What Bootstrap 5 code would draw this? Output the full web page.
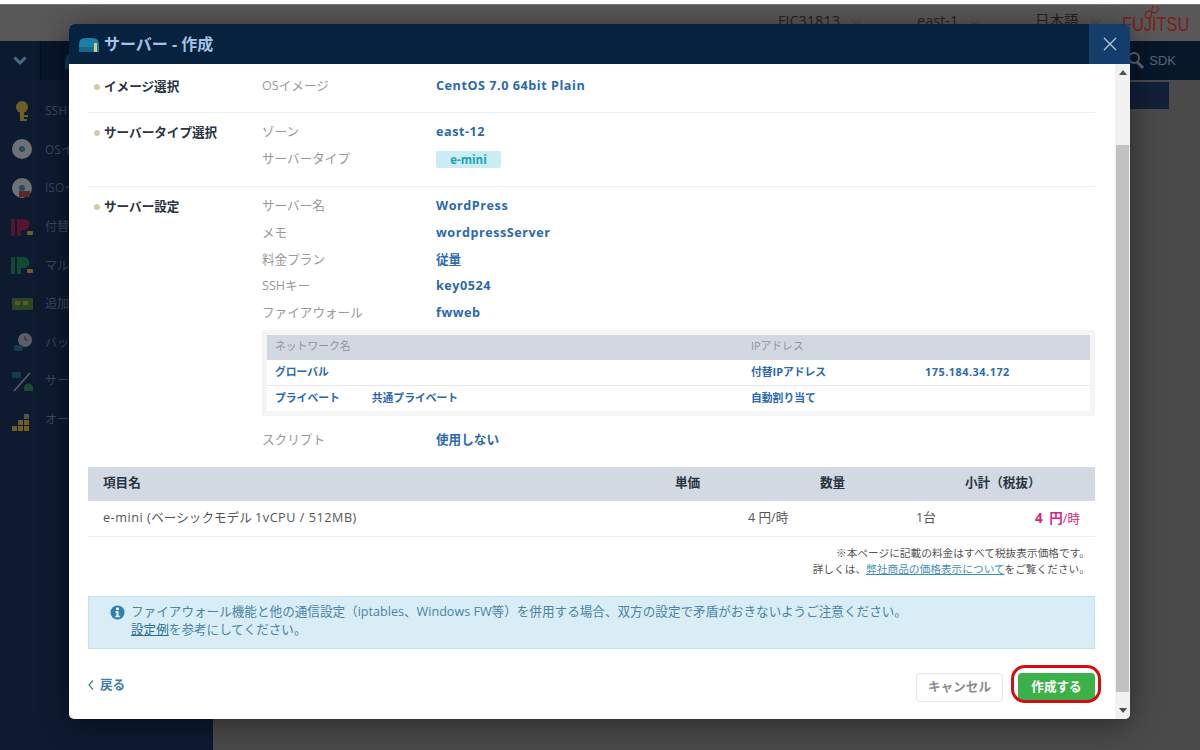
<!DOCTYPE html>
<html lang="ja">
<head>
  <meta charset="UTF-8" />
  <meta name="viewport" content="width=device-width, initial-scale=1" />
  <title>サーバー - 作成</title>
  <link href="https://cdn.jsdelivr.net/npm/bootstrap@5.3.0/dist/css/bootstrap.min.css" rel="stylesheet" />
  <style>
    html, body { height: 750px; overflow: hidden; }
    body { font-family: "Open Sans", "Noto Sans CJK JP", sans-serif; font-size: 12.6px; background: #4a4a4a; position: relative; }
    .lat { letter-spacing: .55px; }

    /* dimmed page behind the dialog */
    .strip-top { height: 5px; background: #fff; border-bottom: 1px solid #777; }
    .head-bar { height: 36px; background: #585858; color: #222; font-size: 14.5px; }
    .head-item { width: 100px; padding-bottom: 4px; }
    .head-item svg { margin-left: 12px; }
    .logo-fj { font-family: "Liberation Sans", sans-serif; font-size: 21px; line-height: 21px; color: #7f1d1d; width: 78px; height: 21px; position: relative; transform: scaleX(.78); transform-origin: left; white-space: nowrap; }
    .logo-fj svg { position: absolute; left: 26px; top: -7px; }
    .nav-dark { height: 39px; background: #08162a; color: #5b6572; }
    .nav-cell { width: 41px; height: 39px; background: #0b1a2e; border-right: 1px solid #050f1f; }
    .side-dark { width: 213px; height: 670px; background: #0d1a30; padding-top: 12px; }
    .side-row { height: 38.6px; color: #3f4857; font-size: 12px; padding-left: 11px; gap: 11px; white-space: nowrap; }
    .side-row svg { width: 23px; height: 23px; flex: none; opacity: .75; }
    .main-dim { height: 670px; padding: 2px 31px 0 0; }
    .dim-btn { width: 39px; height: 27px; background: #121f38; }

    /* dialog */
    .dlg { position: absolute; left: 69px; top: 24px; width: 1061px; height: 695px; border: 0; border-radius: 5px; overflow: hidden; background: #fff; box-shadow: 0 4px 30px rgba(0,0,0,.45); }
    .dlg-head { height: 40px; background: #07223f; color: #a3c2e8; font-size: 16px; font-weight: 700; padding-left: 10px; gap: 5px; }
    .dlg-close { width: 41px; height: 40px; background: #143d6b; border: 0; padding: 0; }
    .dlg-body { height: 655px; }
    .dlg-scroll { padding: 0 20px 0 19px; min-width: 0; }
    .bar-track { width: 15px; background: #f1f1f1; }
    .bar-thumb { height: 547px; margin: 81px 1px 0 1px; background: #c1c1c1; }
    .bar-arrow { height: 17px; }

    .sect { border-bottom: 1px solid #e9f1f7; padding-left: 6px; }
    .sect-first { height: 49px; padding-top: 9px; }
    .sect-second { height: 74px; padding-top: 6px; }
    .sect-last { border-bottom: 0; padding-top: 6px; }
    .sect-name { width: 168px; font-weight: 700; color: #2a3342; line-height: 27px; flex: none; }
    .dot-mark { display: inline-block; width: 6px; height: 6px; border-radius: 50%; background: #d3cca2; margin-right: 4px; vertical-align: 1px; }
    .info-row { height: 26.8px; line-height: 26.8px; }
    .info-key { width: 174px; color: #999; flex: none; }
    .info-val { color: #2a69b0; font-weight: 700; }
    .tag-type { display: inline-block; width: 65px; height: 17px; line-height: 17px; text-align: center; background: #c9edf2; color: #1aa1b5; font-size: 11.5px; border-radius: 2px; vertical-align: -1px; }

    .net-box { background: #f5f5f5; padding: 5px; margin: 3px 0 11px; }
    .net-table { table-layout: fixed; font-size: 10.8px; }
    .net-table th, .net-table td { height: 25px; padding: 0 0 0 8px; border-bottom: 1px solid #e6e8ec; vertical-align: middle; line-height: 1; background: #fff; color: #2a69b0; font-weight: 700; box-shadow: none; }
    .net-table th { background: #d2d8e1; color: #8f959d; font-weight: 400; border-bottom: 0; padding-bottom: 3px; }
    .net-table tbody tr:first-child td { height: 26px; padding-bottom: 1px; }
    .net-table tr:last-child td { border-bottom: 0; }
    .net-gap { margin-left: 32px; }

    .cost-table { table-layout: fixed; margin: 13px 0 0; color: #555; }
    .cost-table th, .cost-table td { padding: 0; vertical-align: middle; border-bottom: 1px solid #eef0f3; box-shadow: none; color: #555; font-weight: 400; background: #fff; }
    .cost-table th { height: 34px; background: #d2d9e2; color: #2a3342; font-weight: 700; border-bottom: 0; }
    .cost-table td { height: 36px; }
    .price-sum { color: #d6267f !important; text-align: right; padding-right: 15px !important; }
    .price-sum b { font-size: 13.5px; word-spacing: 3px; }
    .note-text { font-size: 10.7px; line-height: 16px; color: #555; text-align: right; padding: 8px 5px 0 0; }
    .note-text a { color: #3f90b5; }

    .alert-soft { background: #d8edf5; border: 1px solid #c2e4ef; color: #4c83a6; height: 53px; margin: 19px 0 0; padding: 6px 0 0 21px; border-radius: 0; line-height: 18px; gap: 6px; }
    .alert-soft a { color: #2a6f93; }
    .alert-soft svg { margin-top: 2px; flex: none; }
    .foot-row { height: 54px; margin-top: 20px; }
    .back-link { color: #3f7fa8; font-weight: 700; text-decoration: none; padding-top: 6px; gap: 6px; height: 26px; }
    .btn-cancel { width: 87px; height: 29px; padding: 0; background: #fff; border: 1px solid #e6e6e6; color: #8c8c8c; font-weight: 700; font-size: 12.6px; border-radius: 4px; }
    .btn-make { width: 77px; height: 28px; padding: 0; background: #3cb14a; border: 0; color: #fff; font-weight: 700; font-size: 12.6px; border-radius: 4px; }
    .ring-wrap { position: relative; margin-left: 15px; }
    .ring-wrap::after { content: ""; position: absolute; left: -7px; right: -6px; top: -8px; bottom: -2px; border: 3px solid #d40d12; border-radius: 14px; pointer-events: none; }
  </style>
</head>
<body>

<!-- page behind -->
<div class="strip-top"></div>
<div class="head-bar d-flex align-items-center justify-content-end">
  <div class="head-item" style="margin-right:39px">FJC31813<svg width="9" height="5" viewBox="0 0 9 5"><path d="m.5.500 4 4 4-4" fill="none" stroke="#444"/></svg></div>
  <div class="head-item" style="margin-right:18px">east-1<svg width="9" height="5" viewBox="0 0 9 5"><path d="m.5.500 4 4 4-4" fill="none" stroke="#444"/></svg></div>
  <div class="head-item" style="width:87px">日本語<svg width="9" height="5" viewBox="0 0 9 5"><path d="m.5.500 4 4 4-4" fill="none" stroke="#444"/></svg></div>
  <div class="logo-fj">
    <svg width="24" height="12" viewBox="0 0 24 12"><path d="M12 6c-3-5-9-5-9 0s6 5 9 0 9-5 9 0-6 5-9 0z" transform="rotate(-35 12 6)" fill="none" stroke="#7f1d1d" stroke-width="1.400"/></svg>
    FUJITSU
  </div>
</div>
<div class="nav-dark d-flex align-items-center justify-content-between">
  <div class="d-flex align-items-center">
    <div class="nav-cell d-flex align-items-center justify-content-center">
      <svg width="14" height="10" viewBox="0 0 14 10"><path d="M1.500 1.500 7 7l5.500-5.500" fill="none" stroke="#4a6a85" stroke-width="3"/></svg>
    </div>
    <svg class="ms-4" width="14" height="16" viewBox="0 0 14 16"><path d="M0 16V8q0-7 7-7h7v15z" fill="#123a52"/></svg>
  </div>
  <div class="d-flex align-items-center pe-4 gap-1">
    <svg width="18" height="18" viewBox="0 0 18 18"><circle cx="7" cy="6" r="5" fill="none" stroke="#5b6572" stroke-width="2"/><path d="m10 10 6 6" stroke="#5b6572" stroke-width="3"/></svg>
    <span style="font-family:'Liberation Sans',sans-serif;font-size:13px">SDK</span>
  </div>
</div>
<div class="d-flex">
  <div class="side-dark">
    <div class="side-row d-flex align-items-center">
      <svg viewBox="0 0 23 23"><circle cx="11" cy="7" r="6" fill="#8f7425"/><rect x="9" y="10" width="4" height="11" fill="#8f7425"/><rect x="13" y="15" width="4" height="2" fill="#8f7425"/><rect x="13" y="19" width="3" height="2" fill="#8f7425"/></svg>SSHキー
    </div>
    <div class="side-row d-flex align-items-center">
      <svg viewBox="0 0 23 23"><circle cx="11" cy="11" r="10" fill="#8e8e8e"/><circle cx="11" cy="11" r="3" fill="#2d5a66"/></svg>OSイメージ
    </div>
    <div class="side-row d-flex align-items-center">
      <svg viewBox="0 0 23 23"><circle cx="11" cy="11" r="10" fill="#8e8e8e"/><circle cx="11" cy="11" r="3" fill="#2d5a66"/><rect x="8" y="14" width="11" height="6" fill="#7a2a2a"/></svg>ISOイメージ
    </div>
    <div class="side-row d-flex align-items-center">
      <svg viewBox="0 0 23 23"><path d="M0 3h4v17H0zM6 3h7a5 5 0 0 1 0 11H10v6H6z" fill="#6e1430"/><rect x="16" y="15" width="6" height="4" rx="1" fill="#8f7425"/></svg>付替IPアドレス
    </div>
    <div class="side-row d-flex align-items-center">
      <svg viewBox="0 0 23 23"><path d="M0 3h4v17H0zM6 3h7a5 5 0 0 1 0 11H10v6H6z" fill="#0f5a36"/><rect x="16" y="15" width="6" height="4" rx="1" fill="#8f7425"/></svg>マルチIP
    </div>
    <div class="side-row d-flex align-items-center">
      <svg viewBox="0 0 23 23"><rect x="1" y="5" width="21" height="12" fill="#35551e"/><rect x="4" y="8" width="5" height="4" fill="#7a6a20"/><rect x="12" y="8" width="5" height="4" fill="#7a6a20"/></svg>追加NIC
    </div>
    <div class="side-row d-flex align-items-center">
      <svg viewBox="0 0 23 23"><circle cx="14" cy="9" r="7" fill="#777"/><path d="M14 5v4h3" stroke="#333" fill="none"/><rect x="3" y="14" width="9" height="6" rx="2" fill="#14485a"/></svg>バックアップ
    </div>
    <div class="side-row d-flex align-items-center">
      <svg viewBox="0 0 23 23"><path d="M3 21 19 3" stroke="#777" stroke-width="1.500"/><rect x="1" y="2" width="9" height="6" fill="#14485a"/><path d="M13 21v-3a4 4 0 0 1 9 0v3z" fill="#1f5a32"/></svg>サーバー
    </div>
    <div class="side-row d-flex align-items-center">
      <svg viewBox="0 0 23 23"><g fill="#8f7425"><rect x="1" y="17" width="5" height="5"/><rect x="7" y="17" width="5" height="5"/><rect x="13" y="17" width="5" height="5"/><rect x="7" y="11" width="5" height="5"/><rect x="13" y="11" width="5" height="5"/><rect x="13" y="5" width="5" height="5" fill="#6e6650"/></g></svg>オートスケール
    </div>
  </div>
  <div class="main-dim flex-grow-1 d-flex justify-content-end">
    <div class="dim-btn"></div>
  </div>
</div>

<!-- dialog -->
<div class="modal-content dlg">
  <div class="dlg-head d-flex align-items-center">
    <svg width="20" height="15" viewBox="0 0 20 15"><path d="M0 15V8q0-7 6-7h8q6 0 6 7v7z" fill="#1a7fa8"/><path d="M0 10h14v5H0z" fill="#14688e"/><rect x="15" y="6" width="3" height="9" fill="#d8cc6a"/></svg>
    <span class="flex-grow-1">サーバー - 作成</span>
    <button class="dlg-close d-flex align-items-center justify-content-center" type="button" aria-label="閉じる">
      <svg width="14" height="14" viewBox="0 0 14 14"><path d="m1 1 12 12M13 1 1 13" stroke="#b4c3d4" stroke-width="1.400"/></svg>
    </button>
  </div>
  <div class="dlg-body d-flex">
    <div class="dlg-scroll flex-grow-1">

      <div class="sect sect-first d-flex">
        <div class="sect-name"><span class="dot-mark"></span>イメージ選択</div>
        <div class="flex-grow-1">
          <div class="info-row d-flex"><div class="info-key">OSイメージ</div><div class="info-val lat">CentOS 7.0 64bit Plain</div></div>
        </div>
      </div>

      <div class="sect sect-second d-flex">
        <div class="sect-name"><span class="dot-mark"></span>サーバータイプ選択</div>
        <div class="flex-grow-1">
          <div class="info-row d-flex"><div class="info-key">ゾーン</div><div class="info-val lat">east-12</div></div>
          <div class="info-row d-flex"><div class="info-key">サーバータイプ</div><div class="info-val"><span class="tag-type">e-mini</span></div></div>
        </div>
      </div>

      <div class="sect sect-last d-flex">
        <div class="sect-name"><span class="dot-mark"></span>サーバー設定</div>
        <div class="flex-grow-1">
          <div class="info-row d-flex"><div class="info-key">サーバー名</div><div class="info-val lat">WordPress</div></div>
          <div class="info-row d-flex"><div class="info-key">メモ</div><div class="info-val lat">wordpressServer</div></div>
          <div class="info-row d-flex"><div class="info-key">料金プラン</div><div class="info-val">従量</div></div>
          <div class="info-row d-flex"><div class="info-key">SSHキー</div><div class="info-val lat">key0524</div></div>
          <div class="info-row d-flex"><div class="info-key">ファイアウォール</div><div class="info-val lat">fwweb</div></div>
          <div class="net-box">
            <table class="table net-table mb-0">
              <colgroup><col style="width:476px" /><col style="width:174px" /><col /></colgroup>
              <thead>
                <tr><th>ネットワーク名</th><th colspan="2">IPアドレス</th></tr>
              </thead>
              <tbody>
                <tr><td>グローバル</td><td>付替IPアドレス</td><td class="lat">175.184.34.172</td></tr>
                <tr><td>プライベート<span class="net-gap">共通プライベート</span></td><td colspan="2">自動割り当て</td></tr>
              </tbody>
            </table>
          </div>
          <div class="info-row d-flex"><div class="info-key">スクリプト</div><div class="info-val">使用しない</div></div>
        </div>
      </div>

      <table class="table cost-table">
        <colgroup><col style="width:572px" /><col style="width:146px" /><col style="width:154px" /><col /></colgroup>
        <thead>
          <tr>
            <th style="padding-left:15px">項目名</th>
            <th style="padding-left:15px">単価</th>
            <th style="padding-left:14px">数量</th>
            <th style="padding-left:5px">小計（税抜）</th>
          </tr>
        </thead>
        <tbody>
          <tr>
            <td style="padding-left:15px"><span class="lat">e-mini (</span>ベーシックモデル <span class="lat">1vCPU / 512MB)</span></td>
            <td style="padding-left:88px">4 円/時</td>
            <td style="padding-left:110px">1台</td>
            <td class="price-sum"><b>4 円</b>/時</td>
          </tr>
        </tbody>
      </table>

      <div class="note-text">
        ※本ページに記載の料金はすべて税抜表示価格です。<br />
        詳しくは、<a href="#">弊社商品の価格表示について</a>をご覧ください。
      </div>

      <div class="alert-soft d-flex">
        <svg width="15" height="15" viewBox="0 0 15 15"><circle cx="7.500" cy="7.500" r="7" fill="#2f7fb0"/><circle cx="7.500" cy="3.800" r="1.500" fill="#fff"/><path d="M5.500 6.200h3v4.500h1.200v1.500H5.300v-1.500h1.200V7.700H5.500z" fill="#fff"/></svg>
        <div>ファイアウォール機能と他の通信設定（iptables、Windows FW等）を併用する場合、双方の設定で矛盾がおきないようご注意ください。<br /><a href="#">設定例</a>を参考にしてください。</div>
      </div>

      <div class="foot-row d-flex justify-content-between">
        <a class="back-link d-flex align-items-center" href="#">
          <svg width="6" height="10" viewBox="0 0 6 10"><path d="M5 .5 1 5l4 4.500" fill="none" stroke="#3f7fa8" stroke-width="1.200"/></svg>
          戻る
        </a>
        <div class="d-flex align-items-start pt-1">
          <button class="btn btn-cancel" type="button">キャンセル</button>
          <div class="ring-wrap"><button class="btn btn-make" type="button">作成する</button></div>
        </div>
      </div>
    </div>

    <div class="bar-track d-flex flex-column flex-shrink-0 position-relative">
      <div class="bar-arrow position-absolute top-0 start-0 w-100 d-flex align-items-center justify-content-center">
        <svg width="8" height="5" viewBox="0 0 8 5"><path d="M4 0 8 5H0z" fill="#505050"/></svg>
      </div>
      <div class="bar-thumb"></div>
      <div class="bar-arrow position-absolute bottom-0 start-0 w-100 d-flex align-items-center justify-content-center">
        <svg width="8" height="5" viewBox="0 0 8 5"><path d="M0 0h8L4 5z" fill="#505050"/></svg>
      </div>
    </div>
  </div>
</div>

<script src="https://cdn.jsdelivr.net/npm/bootstrap@5.3.0/dist/js/bootstrap.bundle.min.js"></script>
</body>
</html>
